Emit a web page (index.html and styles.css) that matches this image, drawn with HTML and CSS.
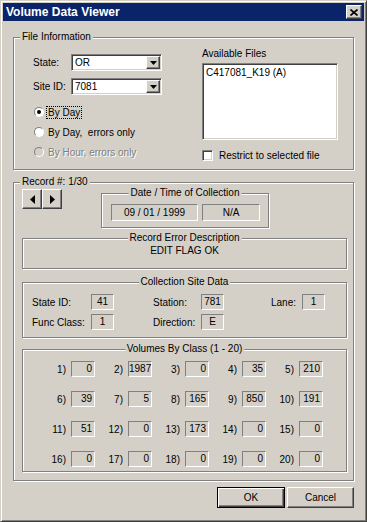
FILE: index.html
```html
<!DOCTYPE html>
<html lang="en">
<head>
  <meta charset="UTF-8" />
  <title>Volume Data Viewer</title>
  <link rel="stylesheet" href="styles.css">
</head>
<body>
  <div class="window">
    <div class="titlebar">
      <span>Volume Data Viewer</span>
      <span class="close-btn">
        <svg width="8" height="7" viewBox="0 0 8 7"><path d="M0.5 0.5 L7.5 6.5 M7.5 0.5 L0.5 6.5" stroke="#000" stroke-width="1.6"/></svg>
      </span>
    </div>

    <div class="client">
      <div class="group file-info">
        <span class="caption">File Information</span>
        <div class="file-left">
          <div class="field-row">
            <span class="field-label">State:</span>
            <div class="combo"><span class="combo-text">OR</span><span class="combo-btn"><svg width="7" height="4" viewBox="0 0 7 4"><polygon points="0,0 7,0 3.5,4" fill="#000"/></svg></span></div>
          </div>
          <div class="field-row">
            <span class="field-label">Site ID:</span>
            <div class="combo"><span class="combo-text">7081</span><span class="combo-btn"><svg width="7" height="4" viewBox="0 0 7 4"><polygon points="0,0 7,0 3.5,4" fill="#000"/></svg></span></div>
          </div>
          <div class="radio"><span class="radio-dot checked"></span><span class="focus">By Day</span></div>
          <div class="radio"><span class="radio-dot"></span><span>By Day,&nbsp; errors only</span></div>
          <div class="radio disabled"><span class="radio-dot"></span><span>By Hour, errors only</span></div>
        </div>
        <div class="file-right">
          <div class="list-label">Available Files</div>
          <div class="listbox">C417081_K19 (A)</div>
          <div class="check"><span class="check-box"></span>Restrict to selected file</div>
        </div>
      </div>

      <div class="group record">
        <span class="caption">Record #: 1/30</span>
        <div class="record-top">
          <div class="arrows">
            <span class="btn arrow-btn"><svg width="5" height="9" viewBox="0 0 5 9"><polygon points="5,0 5,9 0,4.5" fill="#000"/></svg></span>
            <span class="btn arrow-btn"><svg width="5" height="9" viewBox="0 0 5 9"><polygon points="0,0 0,9 5,4.5" fill="#000"/></svg></span>
          </div>
          <div class="group date-group">
            <span class="caption center">Date / Time of Collection</span>
            <span class="ro date-field">09 / 01 / 1999</span>
            <span class="ro time-field">N/A</span>
          </div>
        </div>

        <div class="group error-group">
          <span class="caption center">Record Error Description</span>
          EDIT FLAG OK
        </div>

        <div class="group site-group">
          <span class="caption center">Collection Site Data</span>
          <div class="site-grid">
            <span>State ID:</span><span class="ro">41</span>
            <span>Station:</span><span class="ro">781</span>
            <span>Lane:</span><span class="ro">1</span>
            <span>Func Class:</span><span class="ro">1</span>
            <span>Direction:</span><span class="ro">E</span>
          </div>
        </div>

        <div class="group volumes-group">
          <span class="caption center">Volumes By Class (1 - 20)</span>
          <div class="vol-grid">
            <div class="vol"><span class="vol-label">1)</span><span class="ro">0</span></div>
            <div class="vol"><span class="vol-label">2)</span><span class="ro">1987</span></div>
            <div class="vol"><span class="vol-label">3)</span><span class="ro">0</span></div>
            <div class="vol"><span class="vol-label">4)</span><span class="ro">35</span></div>
            <div class="vol"><span class="vol-label">5)</span><span class="ro">210</span></div>
            <div class="vol"><span class="vol-label">6)</span><span class="ro">39</span></div>
            <div class="vol"><span class="vol-label">7)</span><span class="ro">5</span></div>
            <div class="vol"><span class="vol-label">8)</span><span class="ro">165</span></div>
            <div class="vol"><span class="vol-label">9)</span><span class="ro">850</span></div>
            <div class="vol"><span class="vol-label">10)</span><span class="ro">191</span></div>
            <div class="vol"><span class="vol-label">11)</span><span class="ro">51</span></div>
            <div class="vol"><span class="vol-label">12)</span><span class="ro">0</span></div>
            <div class="vol"><span class="vol-label">13)</span><span class="ro">173</span></div>
            <div class="vol"><span class="vol-label">14)</span><span class="ro">0</span></div>
            <div class="vol"><span class="vol-label">15)</span><span class="ro">0</span></div>
            <div class="vol"><span class="vol-label">16)</span><span class="ro">0</span></div>
            <div class="vol"><span class="vol-label">17)</span><span class="ro">0</span></div>
            <div class="vol"><span class="vol-label">18)</span><span class="ro">0</span></div>
            <div class="vol"><span class="vol-label">19)</span><span class="ro">0</span></div>
            <div class="vol"><span class="vol-label">20)</span><span class="ro">0</span></div>
          </div>
        </div>
      </div>

      <div class="buttons">
        <span class="btn push default">OK</span>
        <span class="btn push">Cancel</span>
      </div>
    </div>
  </div>
</body>
</html>
```

FILE: styles.css
```css
body {
  margin: 0;
  font-family: "Liberation Sans", Arial, sans-serif;
  font-size: 10px;
  color: #000;
  background-color: #d4d0c8;
}
.window {
  width: 367px;
  height: 522px;
  box-sizing: border-box;
  padding: 2px;
  border: 1px solid;
  border-color: #d4d0c8 #404040 #404040 #d4d0c8;
  box-shadow: inset 1px 1px #fff, inset -1px -1px #808080;
  background-color: #d4d0c8;
}
.titlebar {
  height: 18px;
  display: flex;
  align-items: center;
  justify-content: space-between;
  padding: 0 2px 0 3px;
  background-color: #0a246a;
  color: #fff;
  font-size: 12px;
  font-weight: bold;
}
.close-btn {
  width: 16px;
  height: 14px;
  box-sizing: border-box;
  display: flex;
  align-items: center;
  justify-content: center;
  background-color: #d4d0c8;
  border: 1px solid;
  border-color: #fff #404040 #404040 #fff;
  box-shadow: inset -1px -1px #808080;
}
.client {
  padding: 0 10px;
}

/* group boxes */
.group {
  position: relative;
  box-sizing: border-box;
  border: 1px solid #808080;
  box-shadow: inset 1px 1px #fff, 1px 1px #fff;
}
.caption {
  position: absolute;
  top: -7px;
  left: 6px;
  padding: 0 2px;
  line-height: 12px;
  background-color: #d4d0c8;
  white-space: nowrap;
}
.caption.center {
  left: 50%;
  transform: translateX(-50%);
}

/* file information */
.file-info {
  margin-top: 16px;
  height: 133px;
  display: flex;
  padding: 10px 0 0 19px;
}
.file-left {
  width: 150px;
  padding-top: 6px;
}
.field-row {
  display: flex;
  align-items: center;
  height: 17px;
  margin-bottom: 7px;
}
.field-label {
  width: 38px;
}
.combo {
  width: 91px;
  height: 17px;
  box-sizing: border-box;
  display: flex;
  justify-content: space-between;
  padding: 1px;
  background-color: #fff;
  border: 1px solid;
  border-color: #808080 #fff #fff #808080;
  box-shadow: inset 1px 1px #404040, inset -1px -1px #d4d0c8;
}
.combo-text {
  padding-left: 2px;
  line-height: 13px;
}
.combo-btn {
  width: 14px;
  box-sizing: border-box;
  display: flex;
  align-items: center;
  justify-content: center;
  background-color: #d4d0c8;
  border: 1px solid;
  border-color: #fff #404040 #404040 #fff;
  box-shadow: inset -1px -1px #808080;
}
.radio {
  display: flex;
  align-items: center;
  height: 20px;
  padding-left: 1px;
}
.radio-dot {
  width: 10px;
  height: 10px;
  box-sizing: border-box;
  margin-right: 4px;
  border-radius: 50%;
  border: 1px solid;
  border-color: #808080 #fff #fff #808080;
  background-color: #fff;
  position: relative;
}
.radio-dot.checked::after {
  content: "";
  position: absolute;
  left: 2px;
  top: 2px;
  width: 4px;
  height: 4px;
  border-radius: 50%;
  background-color: #000;
}
.radio:first-of-type {
  margin-top: 0;
}
.focus {
  outline: 1px dotted #000;
  padding: 0 1px;
  margin-left: -1px;
}
.radio.disabled {
  color: #808080;
  text-shadow: 1px 1px #fff;
}
.radio.disabled .radio-dot {
  background-color: #d4d0c8;
}
.file-right {
  margin-left: 19px;
}
.list-label {
  line-height: 12px;
}
.listbox {
  width: 136px;
  height: 77px;
  box-sizing: border-box;
  margin-top: 3px;
  padding: 3px 3px;
  line-height: 12px;
  background-color: #fff;
  border: 1px solid;
  border-color: #808080 #fff #fff #808080;
  box-shadow: inset 1px 1px #404040, inset -1px -1px #d4d0c8;
}
.check {
  display: flex;
  align-items: center;
  margin-top: 10px;
  height: 11px;
}
.check-box {
  width: 11px;
  height: 11px;
  box-sizing: border-box;
  margin-right: 6px;
  background-color: #fff;
  border: 1px solid;
  border-color: #808080 #fff #fff #808080;
  box-shadow: inset 1px 1px #404040, inset -1px -1px #d4d0c8;
}

/* record */
.record {
  margin-top: 12px;
  padding: 0 0 8px 8px;
}
.record-top {
  display: flex;
  align-items: flex-start;
}
.arrows {
  display: flex;
  margin-top: 6px;
}
.btn {
  box-sizing: border-box;
  display: flex;
  align-items: center;
  justify-content: center;
  background-color: #d4d0c8;
  border: 1px solid;
  border-color: #fff #404040 #404040 #fff;
  box-shadow: inset -1px -1px #808080;
}
.arrow-btn {
  width: 20px;
  height: 20px;
}
.date-group {
  margin: 10px 0 0 39px;
  width: 168px;
  height: 35px;
  display: flex;
  gap: 4px;
  padding: 10px 0 0 9px;
}
.ro {
  box-sizing: border-box;
  height: 16px;
  line-height: 14px;
  text-align: center;
  border: 1px solid;
  border-color: #808080 #fff #fff #808080;
}
.date-field {
  width: 87px;
  height: 17px;
  line-height: 15px;
}
.time-field {
  width: 58px;
  height: 17px;
  line-height: 15px;
}
.error-group {
  margin-top: 10px;
  width: 325px;
  height: 31px;
  padding-top: 6px;
  line-height: 12px;
  text-align: center;
}
.site-group {
  margin-top: 13px;
  width: 325px;
  height: 56px;
  padding: 11px 0 0 9px;
}
.site-grid {
  display: grid;
  grid-template-columns: 59px 62px 48px 70px 31px 23px;
  grid-auto-rows: 16px;
  row-gap: 4px;
  align-items: center;
}
.site-grid .ro {
  width: 23px;
}
.volumes-group {
  margin-top: 11px;
  width: 325px;
  height: 123px;
  padding: 11px 0 0 20px;
}
.vol-grid {
  display: grid;
  grid-template-columns: repeat(5, 52px);
  grid-auto-rows: 16px;
  column-gap: 5px;
  row-gap: 14px;
}
.vol {
  display: flex;
  align-items: center;
}
.vol-label {
  width: 23px;
  margin-right: 5px;
  text-align: right;
}
.vol .ro {
  width: 24px;
  text-align: right;
  padding-right: 2px;
}

/* dialog buttons */
.buttons {
  display: flex;
  justify-content: flex-end;
  gap: 2px;
  margin-top: 6px;
}
.push {
  width: 67px;
  height: 21px;
  font-size: 10px;
}
.push.default {
  width: 68px;
  border-color: #000;
  box-shadow: inset 1px 1px #fff, inset -1px -1px #404040, inset -2px -2px #808080;
}
```
